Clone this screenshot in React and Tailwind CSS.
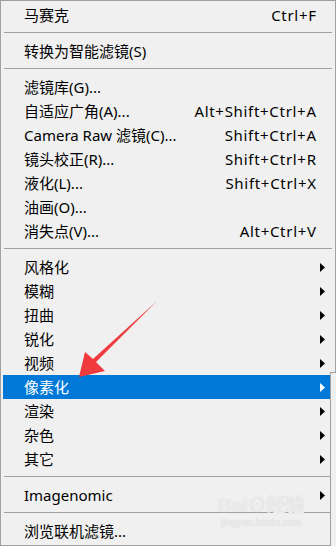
import React from 'react';

const groups = [
  [{ label: '马赛克', key: 'Ctrl+F' }],
  [{ label: '转换为智能滤镜(S)' }],
  [
    { label: '滤镜库(G)...' },
    { label: '自适应广角(A)...', key: 'Alt+Shift+Ctrl+A' },
    { label: 'Camera Raw 滤镜(C)...', key: 'Shift+Ctrl+A' },
    { label: '镜头校正(R)...', key: 'Shift+Ctrl+R' },
    { label: '液化(L)...', key: 'Shift+Ctrl+X' },
    { label: '油画(O)...' },
    { label: '消失点(V)...', key: 'Alt+Ctrl+V' },
  ],
  [
    { label: '风格化', sub: true },
    { label: '模糊', sub: true },
    { label: '扭曲', sub: true },
    { label: '锐化', sub: true },
    { label: '视频', sub: true },
    { label: '像素化', sub: true, active: true },
    { label: '渲染', sub: true },
    { label: '杂色', sub: true },
    { label: '其它', sub: true },
  ],
  [{ label: 'Imagenomic', sub: true }],
  [{ label: '浏览联机滤镜...' }],
];

const Item = ({ label, shortcut, sub, active }) => (
  <div className={`relative flex items-center h-[24px] pl-[21px] pr-[17px] ${active ? 'bg-[#0078d7] text-white' : 'text-black'}`}>
    <span className="flex-1 whitespace-nowrap">{label}</span>
    {shortcut && <span className="whitespace-nowrap tracking-[0.7px] -mr-[0.7px]">{shortcut}</span>}
    {sub && (
      <svg className="absolute right-[8px] top-[8px]" width="5" height="9" viewBox="0 0 5 9">
        <polygon points="0,0 5,4.5 0,9" fill={active ? '#fff' : '#000'} />
      </svg>
    )}
  </div>
);

const Sep = () => (
  <div className="h-[12px] flex items-start pt-[5px]">
    <div className="h-px w-full ml-[1px] mr-[1px] bg-[#a0a0a0]" />
  </div>
);

export default function App() {
  return (
    <div className="relative w-[336px] h-[546px] overflow-hidden bg-white">
      <div className="w-[336px] h-[546px] bg-[#f0f0f0] border border-[#a0a0a0] p-[2px] text-[15px] leading-none font-['Noto_Sans','Noto_Sans_CJK_SC',sans-serif]">
        {groups.map((g, i) => (
          <React.Fragment key={i}>
            {i > 0 && <Sep />}
            {g.map((it) => (
              <Item key={it.label} label={it.label} shortcut={it.key} sub={it.sub} active={it.active} />
            ))}
          </React.Fragment>
        ))}
      </div>

      {/* edge of the opened submenu window */}
      <div className="absolute left-[330px] top-[372px] right-0 bottom-0 bg-[#f0f0f0] border-l border-t border-[#a0a0a0]" />

      {/* watermark */}
      <div className="absolute left-[218px] top-[494px] flex flex-col items-center text-[#ebebeb] font-['Liberation_Sans',sans-serif] pointer-events-none">
        <span className="text-[19px] font-bold leading-none [text-shadow:0_0_1px_#d0d0d0]">Bai<span className="font-['Noto_Sans_CJK_SC',sans-serif]">⊙经验</span></span>
        <span className="text-[10px] leading-none mt-[3px] [text-shadow:0_0_1px_#d0d0d0]">jingyan.baidu.com</span>
      </div>

      {/* red annotation arrow */}
      <svg className="absolute left-0 top-0 pointer-events-none" width="336" height="546" viewBox="0 0 336 546">
        <polygon
          points="157,301 96,362 105,371 79,377 85,352 93,359"
          fill="#f03a3e"
        />
      </svg>
    </div>
  );
}
